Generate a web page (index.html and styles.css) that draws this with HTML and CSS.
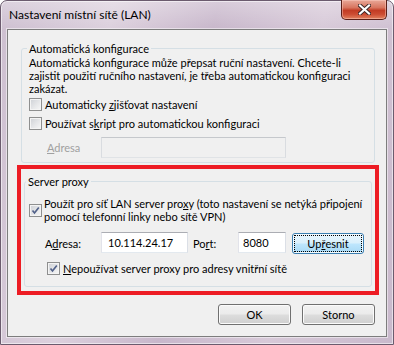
FILE: index.html
```html
<!DOCTYPE html>
<html lang="cs">
<head>
    <meta charset="UTF-8">
    <meta name="viewport" content="width=device-width, initial-scale=1.0">
    <title>Nastavení místní sítě (LAN)</title>
    <link rel="stylesheet" href="styles.css">
</head>
<body>
    <div class="window">
        <div class="titlebar">
            <span class="title">Nastavení místní sítě (LAN)</span>
            <button class="close" type="button" aria-label="Zavřít">
                <svg width="13" height="11" viewBox="0 0 13 11">
                    <path d="M2 1.5 L11 9.5 M11 1.5 L2 9.5" stroke="#3b2626" stroke-width="4" stroke-linecap="square"/>
                    <path d="M2 1.5 L11 9.5 M11 1.5 L2 9.5" stroke="#ffffff" stroke-width="2.2" stroke-linecap="square"/>
                </svg>
            </button>
        </div>

        <div class="client">
            <fieldset class="group group-auto">
                <legend>Automatická konfigurace</legend>
                <p class="note">Automatická konfigurace může přepsat ruční nastavení. Chcete-li<br>zajistit použití ručního nastavení, je třeba automatickou konfiguraci<br>zakázat.</p>

                <label class="check-row">
                    <span class="box"></span>
                    <span>Automaticky <u>z</u>jišťovat nastavení</span>
                </label>
                <label class="check-row">
                    <span class="box"></span>
                    <span>Používat s<u>k</u>ript pro automatickou konfiguraci</span>
                </label>

                <div class="addr-row">
                    <span class="disabled-label"><u>A</u>dresa</span>
                    <input class="field field-disabled" type="text" disabled>
                </div>
            </fieldset>

            <div class="highlight">
                <fieldset class="group group-proxy">
                    <legend>Server proxy</legend>

                    <label class="check-row proxy-check">
                        <span class="box checked">
                            <svg width="11" height="11" viewBox="0 0 11 11"><path d="M2.5 5.5 L4.5 8 L8.8 2.5" fill="none" stroke="#52628a" stroke-width="1.7"/></svg>
                        </span>
                        <span>Použít pro síť LAN server pro<u>x</u>y (toto nastavení se netýká připojení<br>pomocí telefonní linky nebo sítě VPN)</span>
                    </label>

                    <div class="proxy-addr">
                        <span class="addr-label">A<u>d</u>resa:</span>
                        <input class="field field-ip" type="text" value="10.114.24.17">
                        <span class="port-label">Po<u>r</u>t:</span>
                        <input class="field field-port" type="text" value="8080">
                        <button class="btn btn-focus" type="button"><span class="focus-ring">Up<u>ř</u>esnit</span></button>
                    </div>

                    <label class="check-row bypass-check">
                        <span class="box checked">
                            <svg width="11" height="11" viewBox="0 0 11 11"><path d="M2.5 5.5 L4.5 8 L8.8 2.5" fill="none" stroke="#52628a" stroke-width="1.7"/></svg>
                        </span>
                        <span><u>N</u>epoužívat server proxy pro adresy vnitřní sítě</span>
                    </label>
                </fieldset>
            </div>

            <div class="actions">
                <button class="btn" type="button">OK</button>
                <button class="btn" type="button">Storno</button>
            </div>
        </div>
    </div>
</body>
</html>
```

FILE: styles.css
```css
* {
    box-sizing: border-box;
}
html, body {
    margin: 0;
}
body {
    width: 394px;
    height: 345px;
    overflow: hidden;
    font-family: Lato, "Liberation Sans", sans-serif;
    font-size: 11px;
    white-space: nowrap;
    color: #000;
    background: #ffffff;
}
.window {
    width: 394px;
    height: 345px;
    padding: 0 6px 7px;
    border: 1px solid #6b5b6e;
    border-radius: 7px 7px 0 0;
    background:
        linear-gradient(180deg, rgba(255, 255, 255, 0.3), rgba(255, 255, 255, 0) 28px),
        linear-gradient(100deg, #cdbfd0 0%, #dcd0dd 25%, #c8b7cb 48%, #d7c9d8 72%, #c9b9cc 100%);
    box-shadow: inset 0 0 0 1px rgba(255, 255, 255, 0.55);
}
.titlebar {
    height: 28px;
    display: flex;
    justify-content: space-between;
    align-items: flex-start;
}
.title {
    margin: 6px 0 0 2px;
    font-size: 12px;
    line-height: 15px;
}
.close {
    width: 46px;
    height: 20px;
    margin-top: -1px;
    padding: 0;
    border: 1px solid #5a1f18;
    border-top: none;
    border-radius: 0 0 5px 5px;
    background: linear-gradient(180deg, #e9a898 0%, #d8755f 40%, #c23c24 55%, #cc4c32 75%, #e2825f 100%);
    box-shadow: inset 0 0 0 1px rgba(255, 210, 200, 0.45);
    display: flex;
    align-items: center;
    justify-content: center;
}
.client {
    height: 308px;
    background: #f0f0f0;
    border: 1px solid #7d7d7d;
    box-shadow: 0 0 0 1px rgba(255, 255, 255, 0.5);
    display: flex;
    flex-direction: column;
}
.group {
    margin: 0;
    min-width: 0;
    border: 1px solid #d5dfe5;
    border-radius: 3px;
}
.group legend {
    padding: 0 2px;
    line-height: 15px;
}
.group-auto {
    width: 354px;
    margin: 11px 0 0 13px;
    padding: 0 7px 4px 7px;
}
.group-auto legend {
    margin-left: -2px;
}
.note {
    margin: 0;
    line-height: 13px;
}
.check-row {
    display: flex;
    align-items: center;
    gap: 3px;
    height: 19px;
}
.box {
    width: 13px;
    height: 13px;
    flex: none;
    border: 1px solid #8e8f8f;
    background: linear-gradient(135deg, #cdd0d5 0%, #e6e7e9 55%, #f7f7f7 100%);
    box-shadow: inset 0 0 0 1px #f4f4f4;
    display: flex;
    align-items: center;
    justify-content: center;
}
.addr-row {
    display: flex;
    align-items: center;
    margin-top: 4px;
    padding-left: 18px;
}
.disabled-label {
    width: 54px;
    color: #a0a0a0;
}
.field {
    height: 21px;
    margin: 0;
    padding: 0 4px;
    font: inherit;
    color: #000;
    border: 1px solid;
    border-color: #abadb3 #dbdfe6 #e3e9ef #e2e3ea;
    background: #fff;
    border-radius: 0;
}
.field-disabled {
    width: 185px;
    background: #f0f0f0;
    border-color: #c5c8cc #d9dce0 #e0e3e6 #d9dce0;
}
.highlight {
    width: 362px;
    margin: 2px 0 0 9px;
    padding: 5px 3px 4px;
    border: 4px solid #ed1c24;
}
.group-proxy {
    width: 348px;
    padding: 0 6px 8px 4px;
}
.group-proxy legend {
    margin-left: -3px;
}
.proxy-check {
    gap: 2px;
    height: auto;
    margin-top: 8px;
    line-height: 13px;
}
.proxy-addr {
    display: flex;
    height: 22px;
    margin-top: 9px;
    padding-left: 16px;
}
.addr-label {
    width: 56px;
    align-self: center;
}
.port-label {
    width: 45px;
    margin-left: 5px;
    align-self: center;
}
.field-ip {
    width: 87px;
    padding-left: 6px;
}
.field-port {
    width: 48px;
}
.btn {
    width: 73px;
    height: 21px;
    padding: 0;
    font: inherit;
    color: #000;
    border: 1px solid #707070;
    border-radius: 3px;
    background: linear-gradient(180deg, #f2f2f2 0%, #ebebeb 48%, #dddddd 52%, #cfcfcf 100%);
    box-shadow: inset 0 0 0 1px #fbfbfb;
}
.btn-focus {
    width: 72px;
    margin-left: 6px;
    align-self: flex-end;
    padding: 2px;
    border-color: #3c7fb1;
    background: linear-gradient(180deg, #eaf6fd 0%, #d9f0fc 48%, #bee6fd 52%, #a7d9f5 100%);
    box-shadow: inset 0 0 0 1px #f4fbff;
}
.focus-ring {
    display: flex;
    align-items: center;
    justify-content: center;
    height: 100%;
    outline: 1px dotted #000;
}
.bypass-check {
    margin-top: 5px;
    padding-left: 18px;
}
.actions {
    display: flex;
    justify-content: flex-end;
    gap: 11px;
    margin-top: 9px;
    padding-right: 11px;
}
```
